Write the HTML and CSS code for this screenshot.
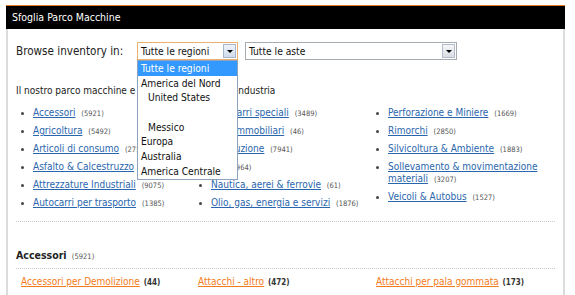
FILE: index.html
```html
<!DOCTYPE html>
<html lang="it">
<head>
<meta charset="utf-8">
<title>Sfoglia Parco Macchine</title>
<link rel="stylesheet" href="styles.css">
</head>
<body>
<div class="panel">
  <div class="panel-head">Sfoglia Parco Macchine</div>
  <div class="panel-body">
    <div class="browse">
      <span class="browse-label">Browse inventory in:</span>
      <div class="select select-region is-open">
        <span class="select-value">Tutte le regioni</span>
        <span class="select-btn"><span class="tri"></span></span>
        <ul class="dropdown">
          <li class="opt is-active">Tutte le regioni</li>
          <li class="opt">America del Nord</li>
          <li class="opt sub">United States</li>
          <li class="opt sub">&nbsp;</li>
          <li class="opt sub">Messico</li>
          <li class="opt">Europa</li>
          <li class="opt">Australia</li>
          <li class="opt">America Centrale</li>
        </ul>
      </div>
      <div class="select select-auction">
        <span class="select-value">Tutte le aste</span>
        <span class="select-btn"><span class="tri"></span></span>
      </div>
    </div>

    <p class="intro">Il nostro parco macchine e attrezzature per ogni industria</p>

    <div class="cats">
      <ul class="cat-col">
        <li><a href="#">Accessori</a> <span class="cnt">(5921)</span></li>
        <li><a href="#">Agricoltura</a> <span class="cnt">(5492)</span></li>
        <li><a href="#">Articoli di consumo</a> <span class="cnt">(2755)</span></li>
        <li><a href="#">Asfalto &amp; Calcestruzzo</a> <span class="cnt">(1302)</span></li>
        <li><a href="#">Attrezzature Industriali</a> <span class="cnt">(9075)</span></li>
        <li><a href="#">Autocarri per trasporto</a> <span class="cnt">(1385)</span></li>
      </ul>
      <ul class="cat-col">
        <li><a href="#">Autocarri speciali</a> <span class="cnt">(3489)</span></li>
        <li><a href="#">Beni immobiliari</a> <span class="cnt">(46)</span></li>
        <li><a href="#">Costruzione</a> <span class="cnt">(7941)</span></li>
        <li><a href="#">Gru</a> <span class="cnt">(964)</span></li>
        <li><a href="#">Nautica, aerei &amp; ferrovie</a> <span class="cnt">(61)</span></li>
        <li><a href="#">Olio, gas, energia e servizi</a> <span class="cnt">(1876)</span></li>
      </ul>
      <ul class="cat-col">
        <li><a href="#">Perforazione e Miniere</a> <span class="cnt">(1669)</span></li>
        <li><a href="#">Rimorchi</a> <span class="cnt">(2850)</span></li>
        <li><a href="#">Silvicoltura &amp; Ambiente</a> <span class="cnt">(1883)</span></li>
        <li><a href="#">Sollevamento &amp; movimentazione materiali</a> <span class="cnt">(3207)</span></li>
        <li><a href="#">Veicoli &amp; Autobus</a> <span class="cnt">(1527)</span></li>
      </ul>
    </div>

    <div class="sep sep-top"></div>

    <h2 class="section-title">Accessori <span class="cnt">(5921)</span></h2>

    <div class="sep sep-mid"></div>

    <div class="subcats">
      <div class="subcat"><a href="#">Accessori per Demolizione</a> <span class="subcnt">(44)</span></div>
      <div class="subcat"><a href="#">Attacchi - altro</a> <span class="subcnt">(472)</span></div>
      <div class="subcat"><a href="#">Attacchi per pala gommata</a> <span class="subcnt">(173)</span></div>
    </div>
  </div>
</div>
</body>
</html>
```
FILE: styles.css
```css
html, body {
  margin: 0;
  padding: 0;
  background: #fff;
}

body {
  padding-top: 5px;
  font-family: "DejaVu Sans Condensed", "DejaVu Sans", sans-serif;
  color: #222;
}

.panel {
  margin-left: 6px;
  width: 559px;
  border-top: 1px solid #e8791f;
}

.panel-head {
  height: 23px;
  line-height: 23px;
  background: #000;
  color: #fff;
  font-size: 10.5px;
  padding-left: 6px;
}

.panel-body {
  border-left: 2px solid #dcdcdc;
  border-right: 2px solid #dcdcdc;
  padding: 13px 8px 0 8px;
  height: 253px;
}

/* browse row */
.browse {
  display: flex;
  align-items: center;
  height: 18px;
}

.browse-label {
  width: 121px;
  font-size: 11.6px;
  color: #222;
}

.select {
  position: relative;
  height: 18px;
  box-sizing: border-box;
  border: 1px solid #a5acb2;
  background: #fff;
  display: flex;
  align-items: center;
}

.select-region {
  width: 101px;
  border-color: #e9b070;
}

.select-auction {
  width: 212px;
  margin-left: 7px;
}

.select-value {
  flex: 1;
  padding-left: 3px;
  font-size: 10.2px;
  color: #111;
  white-space: nowrap;
}

.select-btn {
  width: 13px;
  height: 14px;
  margin-right: 1px;
  box-sizing: border-box;
  border: 1px solid #b4bccb;
  background: linear-gradient(#f6f7f9, #d9dde4);
  display: flex;
  align-items: center;
  justify-content: center;
}

.select-region .select-btn {
  border-color: #a7b6cc;
  background: linear-gradient(#eef3fb, #cfdbeb);
}

.tri {
  width: 0;
  height: 0;
  border-left: 3px solid transparent;
  border-right: 3px solid transparent;
  border-top: 3px solid #000;
}

.dropdown {
  position: absolute;
  top: calc(100% + 1px);
  left: -1px;
  width: 101px;
  box-sizing: border-box;
  margin: 0;
  padding: 0;
  list-style: none;
  background: #fff;
  border: 1px solid #8ea3bd;
  z-index: 5;
}

.opt {
  height: 14.7px;
  line-height: 15.7px;
  padding-left: 3px;
  font-size: 10.2px;
  color: #111;
  white-space: nowrap;
}

.opt.sub {
  padding-left: 10px;
}

.opt.is-active {
  background: #3399ff;
  color: #fff;
}

/* intro */
.intro {
  margin: 25px 0 0 0;
  font-size: 10px;
  line-height: 12px;
  color: #222;
}

/* categories */
.cats {
  display: grid;
  grid-template-columns: 178px 177px 1fr;
  margin-top: 10px;
}

.cat-col {
  margin: 0;
  padding: 0;
  list-style: none;
}

.cat-col li {
  position: relative;
  font-size: 10px;
  line-height: 12px;
  margin-bottom: 6px;
  padding-left: 17px;
  padding-right: 6px;
}

.cat-col li::before {
  content: "";
  position: absolute;
  left: 5px;
  top: 5px;
  width: 3px;
  height: 3px;
  border-radius: 50%;
  background: #444;
}

.cat-col li a {
  color: #2a66ad;
  text-decoration: underline;
}

.cnt {
  font-size: 7.5px;
  line-height: 1;
  color: #555;
}

.cat-col li .cnt {
  margin-left: 3px;
  white-space: nowrap;
}

.sep {
  border-top: 1px dotted #c9c9c9;
}

.sep-top {
  margin-top: 6px;
}

.section-title {
  margin: 26px 0 0 0;
  font-size: 10.5px;
  line-height: 14px;
  font-weight: bold;
  color: #222;
}

.section-title .cnt {
  font-weight: normal;
  margin-left: 2px;
}

.sep-mid {
  margin-top: 6px;
}

.subcats {
  display: grid;
  grid-template-columns: 177px 178px 1fr;
  margin-top: 7px;
  padding-left: 5px;
}

.subcat {
  font-size: 10px;
  line-height: 12px;
  white-space: nowrap;
}

.subcat a {
  color: #f47b20;
  text-decoration: underline;
}

.subcnt {
  font-size: 8px;
  line-height: 1;
  font-weight: bold;
  color: #333;
  margin-left: 1px;
}
```
